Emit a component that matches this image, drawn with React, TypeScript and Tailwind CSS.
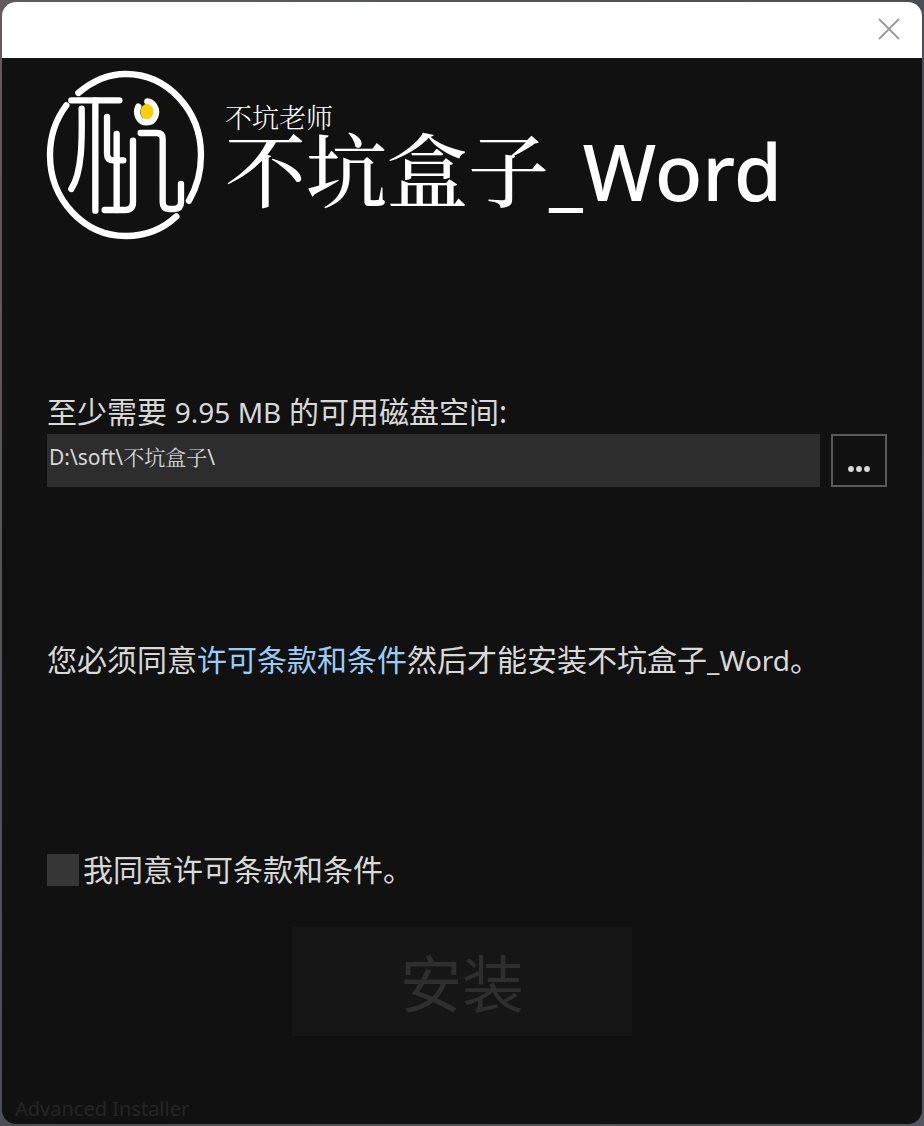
import { useState } from "react";

function Logo() {
  return (
    <svg viewBox="21 21 474 507" className="h-[169px] w-[158px] shrink-0 overflow-visible" role="img" aria-label="不坑盒子" fill="none" stroke="#fff" strokeWidth="19" strokeLinecap="round" strokeLinejoin="round">
      <path d="M115 87C156 52 204 30 257 30C382 30 483 139 483 273C483 324 470 371 447 410" />
      <path d="M409 457C370 494 318 516 257 516C132 516 30 407 30 273C30 217 48 165 79 124" />
      <path d="M94 109H238" />
      <path d="M166 109V440" />
      <path d="M125 134C126 220 128 322 94 375" />
      <path d="M201 159V269Q201 289 221 289H250" />
      <path d="M230 210V438" />
      <path d="M279 230V414Q279 438 255 438H194" />
      <path d="M302 207H350Q368 207 368 225V414Q368 435 388 435H402Q423 435 423 414V360" />
      <ellipse cx="330" cy="144" rx="28" ry="27" fill="#ffce0b" stroke="none" />
      <path d="M295 128C285 150 297 175 320 175C345 175 356 144 341 123Q334 113 322 112" />
      <ellipse cx="321" cy="143" rx="19" ry="23" fill="#ffce0b" stroke="none" />
    </svg>
  );
}

export default function App() {
  const [agreed, setAgreed] = useState(false);
  const [path, setPath] = useState("D:\\soft\\不坑盒子\\");

  return (
    <div className="flex min-h-screen bg-linear-to-br from-[#655a5e] via-[#4b4e56] to-[#55565f] p-[2px] font-['Noto_Sans','Noto_Sans_CJK_SC',sans-serif] text-[#d9d9d9]">
      <div className="flex flex-1 flex-col overflow-hidden rounded-[14px] bg-[#111111]">
        <header className="flex h-14 items-center justify-end bg-white pr-[22px] pb-[2px]">
          <button type="button" aria-label="关闭" className="text-[#999999]">
            <svg viewBox="0 0 22 22" className="size-[22px]" fill="none" stroke="currentColor" strokeWidth="1.8">
              <path d="M1 1L21 21M21 1L1 21" />
            </svg>
          </button>
        </header>

        <main className="flex flex-1 flex-col pr-[35px] pl-[45px]">
          <div className="flex pt-[13px] text-white">
            <Logo />
            <div className="pt-8 pl-5">
              <p className="font-['Noto_Serif_CJK_SC','Noto_Sans_CJK_SC',serif] text-[27px] leading-7 font-light">不坑老师</p>
              <h1 className="font-['Noto_Sans','Noto_Serif_CJK_SC','Noto_Sans_CJK_SC',sans-serif] text-[81px] leading-[78px] font-medium whitespace-nowrap">
                不坑盒子<span className="text-[78px]">_Word</span>
              </h1>
            </div>
          </div>

          <label htmlFor="folder" className="mt-[152px] text-[30px] leading-10">
            至少需要 <span className="text-[28px]">9.95 MB</span> 的可用磁盘空间:
          </label>
          <div className="mt-[2px] flex gap-[11px]">
            <input
              id="folder"
              value={path}
              onChange={(e) => setPath(e.target.value)}
              className="h-[53px] min-w-0 flex-1 bg-[#2d2d2d] px-[2px] pb-[10px] font-['Noto_Sans','Noto_Serif_CJK_SC','Noto_Sans_CJK_SC',sans-serif] text-[21px] outline-none"
            />
            <button type="button" aria-label="浏览" className="flex h-[53px] w-14 items-end justify-center border-2 border-[#5a5a5a] pb-[13px]">
              <svg viewBox="0 0 22 6" className="h-[6px] w-[22px]" fill="#d9d9d9">
                <circle cx="3" cy="3" r="2.9" />
                <circle cx="11" cy="3" r="2.9" />
                <circle cx="19" cy="3" r="2.9" />
              </svg>
            </button>
          </div>

          <p className="mt-[153px] text-[30px] leading-10">
            您必须同意<a href="#terms" className="text-[#99cdf7]">许可条款和条件</a>然后才能安装不坑盒子<span className="text-[28px]">_Word</span>。
          </p>

          <label className="mt-[170px] flex items-center gap-1 text-[30px] leading-10">
            <input
              type="checkbox"
              checked={agreed}
              onChange={(e) => setAgreed(e.target.checked)}
              className="size-8 appearance-none bg-[#363636] checked:bg-[#99cdf7]"
            />
            我同意许可条款和条件。
          </label>

          <button type="button" disabled={!agreed} className="mt-[37px] mr-[10px] h-[109px] w-[340px] self-center bg-[#161616] pt-1 text-[62px] leading-none text-[#2e2e2e] enabled:bg-[#2d2d2d] enabled:text-white">
            安装
          </button>
        </main>

        <footer className="px-[13px] text-[20px] leading-[30px] text-[#252525]">Advanced Installer</footer>
      </div>
    </div>
  );
}
